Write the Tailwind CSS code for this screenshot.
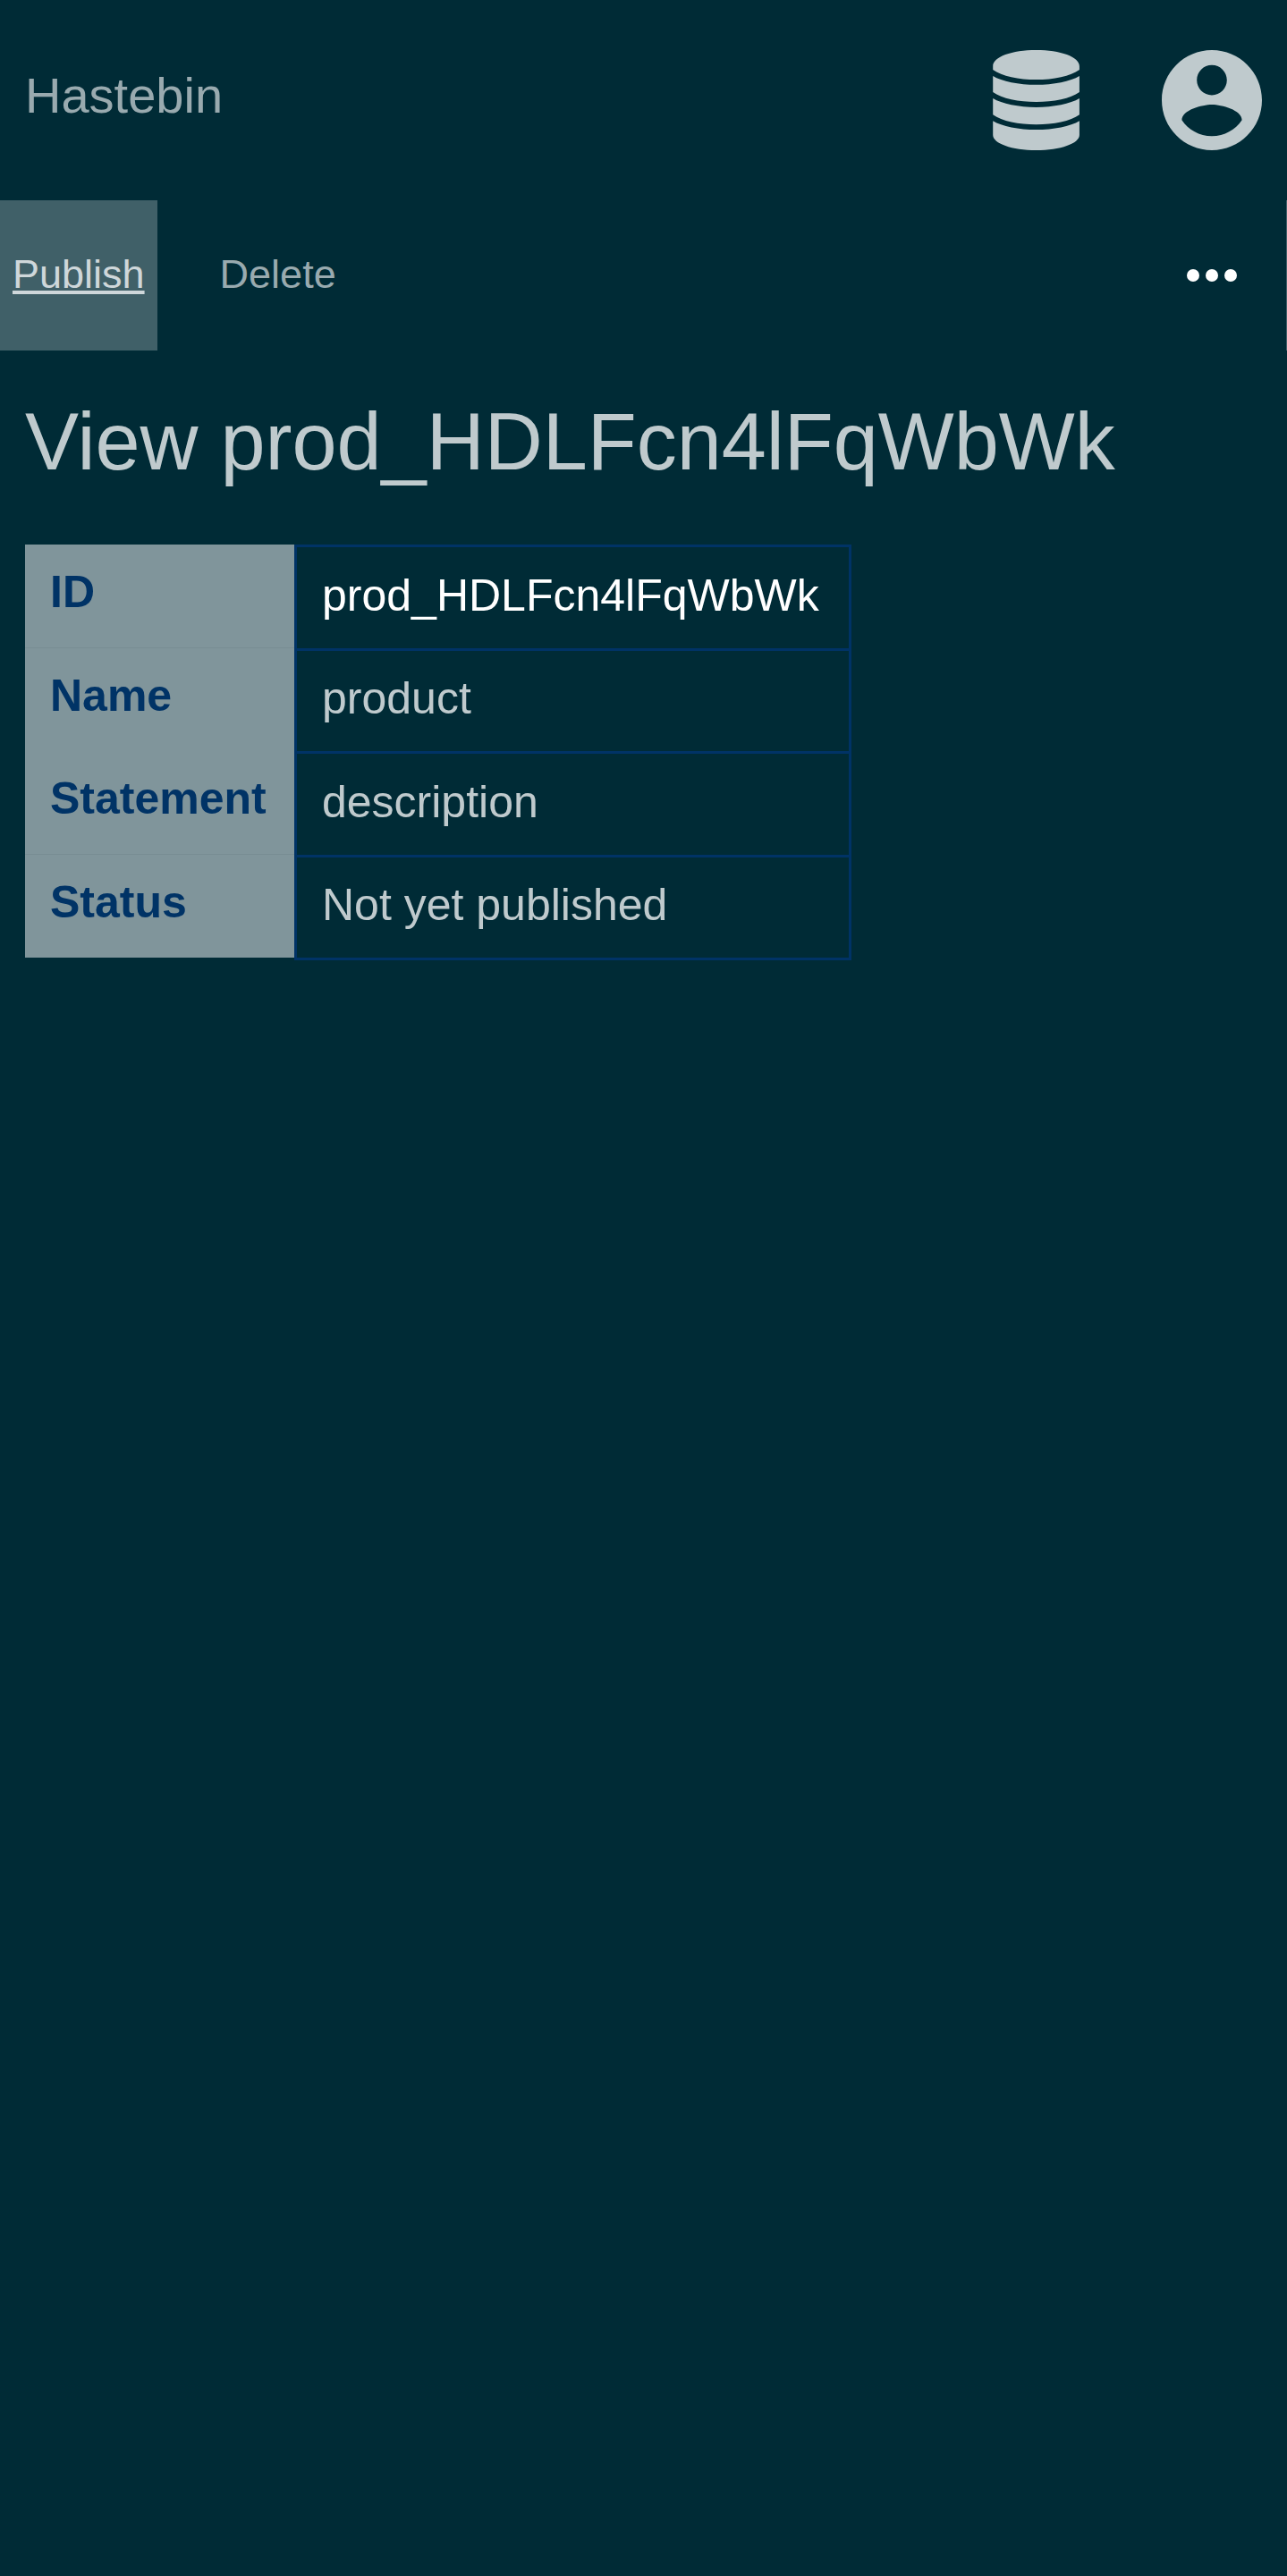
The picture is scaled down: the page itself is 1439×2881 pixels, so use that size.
<!DOCTYPE html>
<html lang="en">
<head>
<meta charset="utf-8">
<meta name="viewport" content="width=device-width, initial-scale=1">
<title>Hastebin</title>
<script src="https://cdn.jsdelivr.net/npm/@tailwindcss/browser@4"></script>
</head>
<body class="min-h-screen bg-[#002b36] font-['Liberation_Sans',Arial,sans-serif] text-[#bfcacd]">
  <header class="flex h-[224px] items-center justify-between px-7">
    <a href="#" class="pb-2.5 text-[56px] leading-[64px] text-[#99aaaf]">Hastebin</a>
    <nav class="flex gap-[84px]" aria-label="Main">
      <a href="#" aria-label="Products">
        <svg class="size-28" viewBox="-30 0 512 512" fill="currentColor" aria-hidden="true"><path d="M224 0C100 0 3 35 3 82v18c45 33 133 51 221 51s176-18 221-51V82C445 35 348 0 224 0zM3 132v83c45 33 133 50 221 50s176-17 221-50v-83c-45 28-133 45-221 45S48 160 3 132zM3 247v83c45 33 133 50 221 50s176-17 221-50v-83c-45 28-133 45-221 45S48 275 3 247zM3 362v72c0 43 97 78 221 78s221-35 221-78v-72c-45 28-133 45-221 45S48 390 3 362z"/></svg>
      </a>
      <a href="#" aria-label="Account">
        <svg class="size-28" viewBox="2 2 20 20" fill="currentColor" aria-hidden="true"><path d="M12 2C6.480 2 2 6.480 2 12s4.480 10 10 10 10-4.480 10-10S17.520 2 12 2zm0 3c1.660 0 3 1.340 3 3s-1.340 3-3 3-3-1.340-3-3 1.340-3 3-3zm0 14.200c-2.500 0-4.710-1.280-6-3.220.030-1.990 4-3.080 6-3.080 1.990 0 5.970 1.090 6 3.080-1.290 1.940-3.500 3.220-6 3.220z"/></svg>
      </a>
    </nav>
  </header>

  <div class="flex h-[168px] items-stretch border-r border-[#40606a] text-[45px] leading-[52px]">
    <button type="button" class="bg-[#406068] px-3.5 pb-0.5 text-[#cfd7da] underline">Publish</button>
    <button type="button" class="ml-14 px-3.5 pb-0.5 text-[#99aaaf]">Delete</button>
    <button type="button" aria-label="More actions" class="ml-auto pl-14 pr-[55px] text-white">
      <svg class="size-14" viewBox="0 0 56 56" fill="currentColor" aria-hidden="true"><circle cx="7" cy="28" r="7"/><circle cx="28" cy="28" r="7"/><circle cx="49" cy="28" r="7"/></svg>
    </button>
  </div>

  <main class="px-7 pt-[50px]">
    <h1 class="text-[90px] leading-[104px]">View prod_HDLFcn4lFqWbWk</h1>
    <table class="mt-[63px] border-separate border-spacing-0 text-left text-[50px] leading-[58px]">
      <tbody>
        <tr>
          <th scope="row" class="h-[116px] min-w-[301px] w-[301px] border-b border-[#788d93] bg-[#80959b] px-7 pb-2.5 text-[#003366]">ID</th>
          <td class="w-[623px] border-x-3 border-t-3 border-[#003366] px-7 pb-1.5 text-white">prod_HDLFcn4lFqWbWk</td>
        </tr>
        <tr>
          <th scope="row" class="h-[115px] bg-[#80959b] px-7 pb-2.5 text-[#003366]">Name</th>
          <td class="border-x-3 border-t-3 border-[#003366] px-7 pb-1.5">product</td>
        </tr>
        <tr>
          <th scope="row" class="h-[116px] border-b border-[#788d93] bg-[#80959b] px-7 pb-2.5 text-[#003366]">Statement</th>
          <td class="border-x-3 border-t-3 border-[#003366] px-7 pb-1.5">description</td>
        </tr>
        <tr>
          <th scope="row" class="h-[118px] border-b-3 border-transparent bg-[#80959b] bg-clip-padding px-7 pb-2.5 text-[#003366]">Status</th>
          <td class="border-3 border-[#003366] px-7 pb-1.5">Not yet published</td>
        </tr>
      </tbody>
    </table>
  </main>
</body>
</html>
